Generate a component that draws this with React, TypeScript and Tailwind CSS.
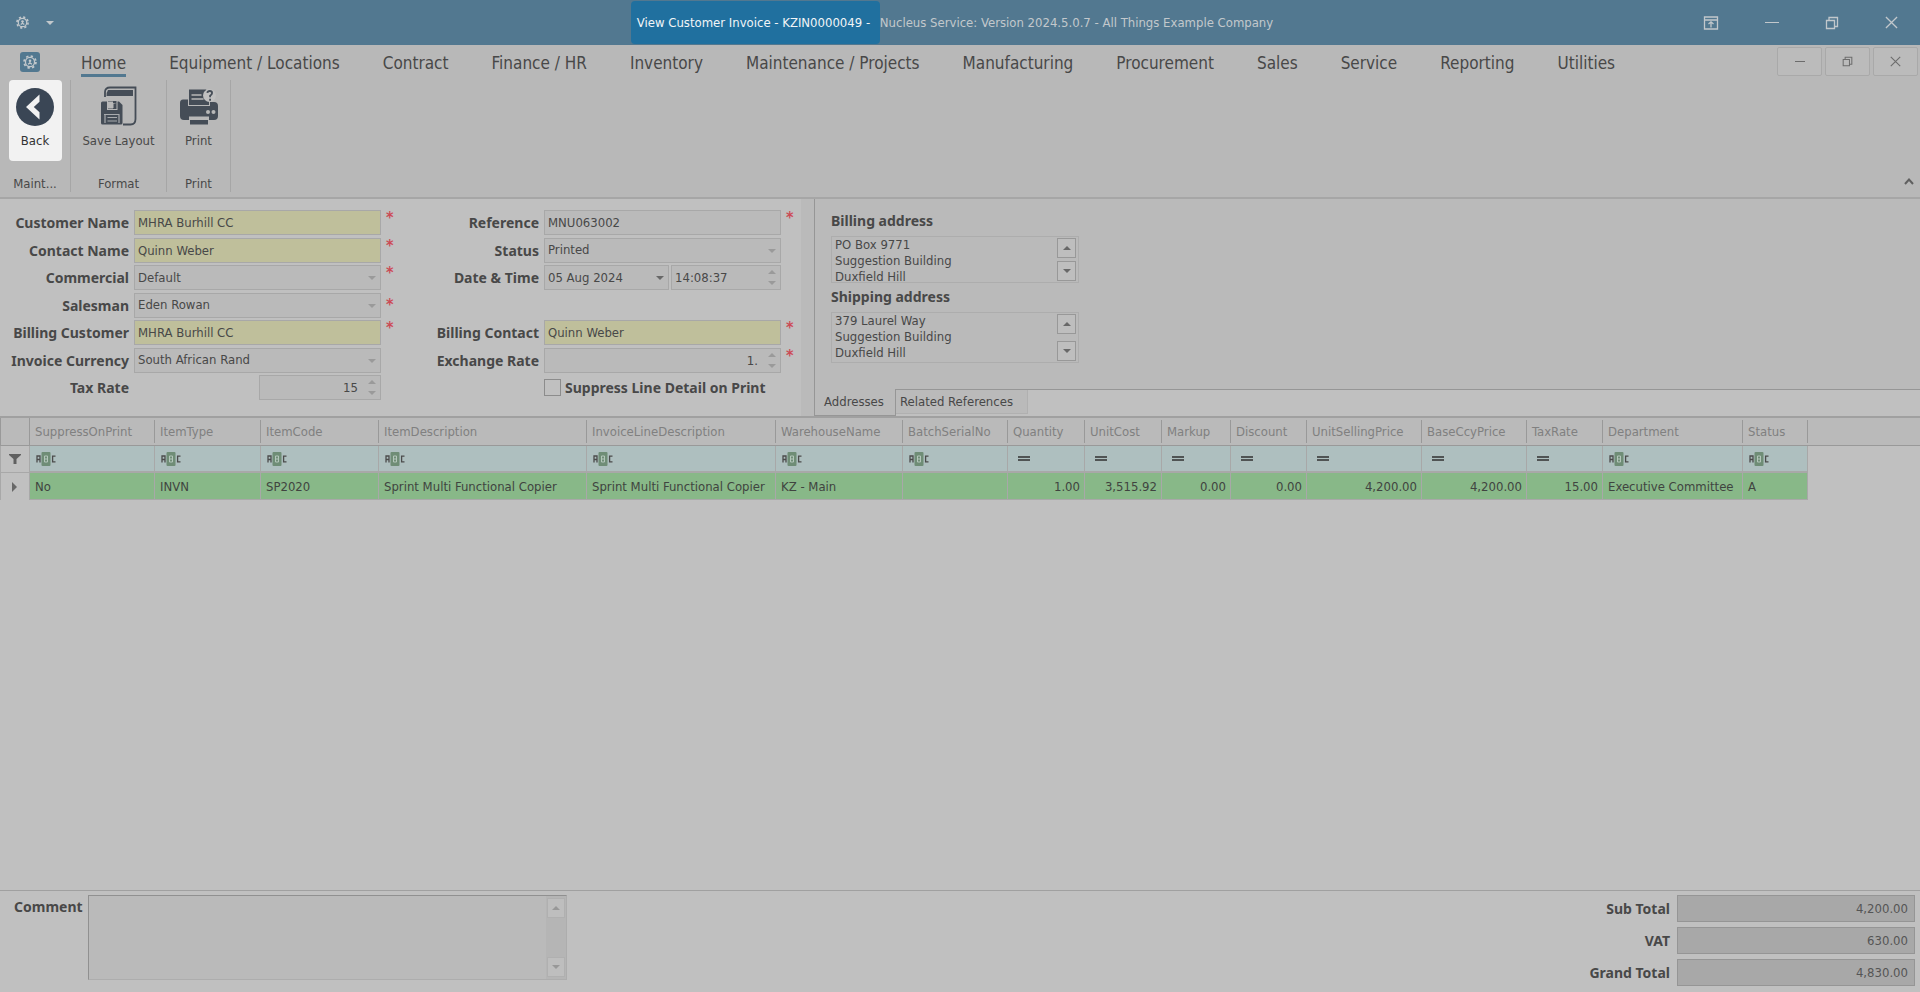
import React from 'react';
import clsx from 'clsx';

const MENU = [
  'Home',
  'Equipment / Locations',
  'Contract',
  'Finance / HR',
  'Inventory',
  'Maintenance / Projects',
  'Manufacturing',
  'Procurement',
  'Sales',
  'Service',
  'Reporting',
  'Utilities',
];

interface Column {
  name: string;
  width: string;
  value: string;
  numeric?: boolean;
}

const COLUMNS: Column[] = [
  { name: 'SuppressOnPrint', width: 'w-[125px]', value: 'No' },
  { name: 'ItemType', width: 'w-[106px]', value: 'INVN' },
  { name: 'ItemCode', width: 'w-[118px]', value: 'SP2020' },
  { name: 'ItemDescription', width: 'w-[208px]', value: 'Sprint Multi Functional Copier' },
  { name: 'InvoiceLineDescription', width: 'w-[189px]', value: 'Sprint Multi Functional Copier' },
  { name: 'WarehouseName', width: 'w-[127px]', value: 'KZ - Main' },
  { name: 'BatchSerialNo', width: 'w-[105px]', value: '' },
  { name: 'Quantity', width: 'w-[77px]', value: '1.00', numeric: true },
  { name: 'UnitCost', width: 'w-[77px]', value: '3,515.92', numeric: true },
  { name: 'Markup', width: 'w-[69px]', value: '0.00', numeric: true },
  { name: 'Discount', width: 'w-[76px]', value: '0.00', numeric: true },
  { name: 'UnitSellingPrice', width: 'w-[115px]', value: '4,200.00', numeric: true },
  { name: 'BaseCcyPrice', width: 'w-[105px]', value: '4,200.00', numeric: true },
  { name: 'TaxRate', width: 'w-[76px]', value: '15.00', numeric: true },
  { name: 'Department', width: 'w-[140px]', value: 'Executive Committee' },
  { name: 'Status', width: 'w-[65px]', value: 'A' },
];

const boldLabel = "font-['Noto_Sans',sans-serif] text-[14px] font-bold text-[#484848]";

/* ---------- icons ---------- */

const GearIcon: React.FC<{ className?: string }> = ({ className }) => (
  <svg viewBox="0 0 16 16" className={className} fill="none" stroke="currentColor">
    <circle cx="8" cy="8" r="5.2" strokeWidth="1.5" />
    <circle cx="8" cy="8" r="6.8" strokeWidth="2" strokeDasharray="2.67 2.67" />
    <circle cx="8" cy="6.6" r="1.5" fill="currentColor" stroke="none" />
    <path d="M8 7v2.500M5.800 10.600L8 9l2.200 1.600" strokeWidth="1.5" />
  </svg>
);

const BackIcon = () => (
  <svg viewBox="0 0 38 38" className="size-[38px]">
    <circle cx="19" cy="19" r="19" fill="#3a4655" />
    <path d="M23.5 6.5v7.2L17.800 19l5.700 5.300v7.200L10 19z" fill="#f2f2f2" />
  </svg>
);

const SaveLayoutIcon = () => (
  <svg viewBox="0 0 36 40" className="h-10 w-9">
    <path d="M4 11V6q0-4.500 5-4.500h25.500V33q0 5.500-5 5.500H22" fill="none" stroke="#454d57" strokeWidth="1.800" />
    <path d="M7 4h25v6H5.500q0-4 1.500-6z" fill="#454d57" />
    <path d="M0 17q0-1.500 1.500-1.500H18l3.500 3.500v18q0 1.500-1.500 1.500H1.500Q0 38.500 0 37z" fill="#454d57" />
    <path d="M6 15h10.500v9H6z" fill="#b8b8b8" />
    <path d="M7 15h8.500v8H7z" fill="#454d57" />
    <path d="M6 15.500h6v7H6zM12 17h2.500v5H12z" fill="#b8b8b8" />
    <path d="M12.500 17.500h2.500v5h-2.500z" fill="#454d57" />
    <path d="M3 28.500h15.500M4 37v-8.500M18 37v-8.500M6.500 31.500h9.500M6.500 35h9.500" stroke="#a8abae" strokeWidth="1.200" />
  </svg>
);

const PrintIcon = () => (
  <svg viewBox="0 0 40 40" className="size-10">
    <path d="M10 3.500h17l3 3V19H10z" fill="#454d57" />
    <path d="M12.500 9h10M12.500 13h12" stroke="#b8b8b8" strokeWidth="1.300" />
    <path d="M4 13.500h5V20h22v-4h4q4 0 4 4v10q0 4-4 4h-5v-3.500H10V34H5q-4 0-4-4V17q0-3.500 3-3.500z" fill="#454d57" />
    <path d="M11 34h18v4.500H11z" fill="#454d57" />
    <circle cx="30.500" cy="9.500" r="6.500" fill="#c0c0c0" />
    <path d="M28.300 6.800q.3-1.800 2.500-1.800t2.300 2q0 1.300-2 2.700v1.600M31.100 12.800v2" fill="none" stroke="#454d57" strokeWidth="1.800" />
    <circle cx="29" cy="26" r="2" fill="#b8b8b8" />
    <circle cx="34.500" cy="26" r="2" fill="#b8b8b8" />
  </svg>
);

const RestoreIcon: React.FC<{ className?: string }> = ({ className }) => (
  <svg viewBox="0 0 14 14" className={className} fill="none" stroke="currentColor" strokeWidth="1.300">
    <path d="M1.500 4.500h8v8h-8zM4 4V1.500h8.500v9H10" />
  </svg>
);

const CloseIcon: React.FC<{ className?: string }> = ({ className }) => (
  <svg viewBox="0 0 14 14" className={className} stroke="currentColor" strokeWidth="1.400">
    <path d="M1 1l12 12M13 1L1 13" />
  </svg>
);

const RibbonToggleIcon = () => (
  <svg viewBox="0 0 16 14" className="h-[14px] w-4" fill="none" stroke="currentColor" strokeWidth="1.300">
    <path d="M1.500 1h13v12h-13zM1.500 4h13M8 11.500V6M5.500 8L8 5.800 10.500 8" />
  </svg>
);

const Caret: React.FC<{ up?: boolean; className?: string }> = ({ up, className }) => (
  <svg viewBox="0 0 8 4" className={clsx('h-1 w-2', className)} fill="currentColor">
    <path d={up ? 'M0 4h8L4 0z' : 'M0 0h8L4 4z'} />
  </svg>
);

const AbcIcon = () => (
  <svg viewBox="0 0 20 14" className="h-[14px] w-5" fill="none">
    <path d="M1 10.500V4h3v6.500M1 7.500h3" stroke="#4c4c4c" strokeWidth="1.300" />
    <rect x="5.500" width="9" height="14" rx="1" fill="#6f8d76" />
    <path d="M8.500 4h3v6h-3zM8.500 7h3" stroke="#b4c6bb" strokeWidth="1" />
    <path d="M19.500 4.200H16.600v5.600h2.900" stroke="#4c4c4c" strokeWidth="1.300" />
  </svg>
);

const EqualsIcon = () => (
  <svg viewBox="0 0 12 6" className="h-[6px] w-3" fill="#505454">
    <path d="M0 0h12v2H0zM0 3h12v2H0z" />
  </svg>
);

/* ---------- form pieces ---------- */

const fieldBox = 'h-[25px] border border-[#a8a8a8] pl-[3px] text-[13px] text-[#484848] outline-none';

interface RowProps {
  label?: string;
  htmlFor?: string;
  required?: boolean;
  lowMark?: boolean;
  children: React.ReactNode;
}

const FormRow: React.FC<RowProps> = ({ label, htmlFor, required, lowMark, children }) => (
  <div className="flex h-[25px]">
    <label htmlFor={htmlFor} className={clsx(boldLabel, 'w-[129px] shrink-0 pt-[1px] text-right leading-6')}>
      {label}
    </label>
    <div className="ml-[5px] flex flex-1 justify-end gap-[2px]">{children}</div>
    <span className={clsx('w-5 shrink-0 pl-[5px] text-[16px] font-bold leading-4 text-[#cc4a56]', lowMark && 'pt-1')}>
      {required && '*'}
    </span>
  </div>
);

const TextField: React.FC<{ id: string; value: string; yellow?: boolean }> = ({ id, value, yellow }) => (
  <input
    id={id}
    type="text"
    readOnly
    defaultValue={value}
    className={clsx(fieldBox, 'w-full', yellow ? 'bg-[#bfbf9b]' : 'bg-[#bababa]')}
  />
);

const SelectField: React.FC<{ id: string; value: string; active?: boolean }> = ({ id, value, active }) => (
  <div className="relative flex-1">
    <select id={id} className={clsx(fieldBox, 'w-full appearance-none bg-[#bababa]')}>
      <option>{value}</option>
    </select>
    <Caret className={clsx('pointer-events-none absolute right-[5px] top-[11px]', active ? 'text-[#686868]' : 'text-[#9a9a9a]')} />
  </div>
);

interface SpinProps {
  id: string;
  value: string;
  width: string;
  right?: boolean;
  label?: string;
}

const SpinField: React.FC<SpinProps> = ({ id, value, width, right, label }) => (
  <div className={clsx('relative', width)}>
    <input
      id={id}
      type="text"
      readOnly
      aria-label={label}
      defaultValue={value}
      className={clsx(fieldBox, 'w-full bg-[#bababa] pr-[22px]', right && 'text-right')}
    />
    <div className="pointer-events-none absolute right-[5px] top-[5px] flex flex-col gap-[7px] text-[#9a9a9a]">
      <Caret up />
      <Caret />
    </div>
  </div>
);

const AddressBox: React.FC<{ id: string; label: string; lines: string; height: string }> = ({ id, label, lines, height }) => (
  <div>
    <label htmlFor={id} className={clsx(boldLabel, 'block h-[29px] leading-7')}>{label}</label>
    <div className={clsx('flex w-[248px] border border-[#adadad]', height)}>
      <textarea
        id={id}
        readOnly
        defaultValue={lines}
        className="h-full flex-1 resize-none overflow-hidden pl-[3px] text-[13px] leading-4 text-[#484848] outline-none"
      />
      <div className="flex w-[21px] flex-col justify-between py-[1px] pr-[2px]">
        {[true, false].map((up) => (
          <button
            key={String(up)}
            aria-label={up ? 'Scroll up' : 'Scroll down'}
            className="flex h-5 items-center justify-center border border-[#989898] bg-[#bebebe] text-[#686868]"
          >
            <Caret up={up} />
          </button>
        ))}
      </div>
    </div>
  </div>
);

const RibbonGroup: React.FC<{ title: string; width: string; children: React.ReactNode }> = ({ title, width, children }) => (
  <div className={clsx('flex h-[112px] flex-col items-center justify-between border-r border-[#a6a6a6]', width)}>
    {children}
    <span className="h-5 leading-6">{title}</span>
  </div>
);

const ribbonButton = 'flex flex-col items-center gap-[5px] leading-5';

const Total: React.FC<{ id: string; label: string; value: string }> = ({ id, label, value }) => (
  <div className="flex items-center gap-[7px]">
    <label htmlFor={id} className={clsx(boldLabel, 'flex-1 text-right')}>{label}</label>
    <input
      id={id}
      readOnly
      defaultValue={value}
      className="h-[27px] w-[238px] border border-[#959595] bg-[#a8a8a8] pr-[6px] text-right text-[13px] text-[#555] outline-none"
    />
  </div>
);

export default function App() {
  return (
    <div className="flex min-h-screen flex-col bg-[#c0c0c0] font-['DejaVu_Sans_Condensed','DejaVu_Sans',sans-serif] text-[13px] text-[#484848]">
      {/* Title bar */}
      <header className="flex h-[45px] items-center bg-[#527890] text-[#c2c8cc]">
        <div className="flex flex-1 items-center gap-[17px] pl-4">
          <GearIcon className="size-[13px]" />
          <button aria-label="Customize quick access"><Caret /></button>
        </div>
        <h1 className="flex items-center pr-[10px] leading-5">
          <span className="flex h-[43px] w-[249px] items-center whitespace-nowrap rounded bg-[#20709f] pl-[6px] text-[#f2f5f7]">
            View Customer Invoice - KZIN0000049 -
          </span>
          <span className="whitespace-nowrap">Nucleus Service: Version 2024.5.0.7 - All Things Example Company</span>
        </h1>
        <div className="flex flex-1 items-center justify-end gap-[46px] pr-[22px]">
          <button aria-label="Ribbon display options"><RibbonToggleIcon /></button>
          <button aria-label="Minimize" className="h-px w-[14px] bg-current" />
          <button aria-label="Restore"><RestoreIcon className="size-[14px]" /></button>
          <button aria-label="Close"><CloseIcon className="size-[13px]" /></button>
        </div>
      </header>

      {/* Ribbon */}
      <section className="border-b-2 border-[#a6a6a6] bg-[#b8b8b8]">
        <div className="flex h-[35px] pl-5">
          <button aria-label="Application menu" className="mt-[7px] flex size-5 shrink-0 items-center justify-center rounded-[3px] bg-[#527890] text-[#c2c8cc]">
            <GearIcon className="size-[14px]" />
          </button>
          <nav className="ml-[41px] flex flex-1 gap-[43px] text-[17px]">
            {MENU.map((item) => (
              <a
                key={item}
                href="#"
                className={clsx(
                  'h-8 whitespace-nowrap pt-[4px] leading-7',
                  item === 'Home' && 'border-b-3 border-[#527890]'
                )}
              >
                {item}
              </a>
            ))}
          </nav>
          <div className="flex gap-[3px] pr-[2px] pt-[2px] text-[#6c6c6c]">
            <button aria-label="Minimize document" className="flex h-[29px] w-[45px] items-center justify-center rounded-[2px] border border-[#a9a9a9] bg-[#bbb]">
              <span className="h-px w-[10px] bg-current" />
            </button>
            <button aria-label="Restore document" className="flex h-[29px] w-[45px] items-center justify-center rounded-[2px] border border-[#a9a9a9] bg-[#bbb]">
              <RestoreIcon className="size-[11px]" />
            </button>
            <button aria-label="Close document" className="flex h-[29px] w-[45px] items-center justify-center rounded-[2px] border border-[#a9a9a9] bg-[#bbb]">
              <CloseIcon className="size-[11px]" />
            </button>
          </div>
        </div>

        <div className="flex h-[117px]">
          <div className="flex flex-1">
            <RibbonGroup title="Maint..." width="w-[71px]">
              <button className={clsx(ribbonButton, 'h-[81px] w-[53px] shrink-0 rounded bg-[#f2f2f2] pt-2 text-[#333]')}>
                <BackIcon />
                <span>Back</span>
              </button>
            </RibbonGroup>
            <RibbonGroup title="Format" width="w-24">
              <button className={clsx(ribbonButton, 'pt-[6px]')}>
                <SaveLayoutIcon />
                <span>Save Layout</span>
              </button>
            </RibbonGroup>
            <RibbonGroup title="Print" width="w-16">
              <button className={clsx(ribbonButton, 'pt-[6px]')}>
                <PrintIcon />
                <span>Print</span>
              </button>
            </RibbonGroup>
          </div>
          <button aria-label="Collapse ribbon" className="self-end pb-3 pr-[6px] text-[#606060]">
            <svg viewBox="0 0 10 7" className="h-[7px] w-[10px]" fill="none" stroke="currentColor" strokeWidth="2">
              <path d="M1 6l4-4.500L9 6" />
            </svg>
          </button>
        </div>
      </section>

      {/* Invoice details */}
      <main className="flex flex-1 flex-col">
        <section className="flex h-[217px]">
          <div className="flex pt-[11px]">
            <div className="grid h-[190px] w-[401px] content-between">
              <FormRow label="Customer Name" htmlFor="customer" required><TextField id="customer" value="MHRA Burhill CC" yellow /></FormRow>
              <FormRow label="Contact Name" htmlFor="contact" required><TextField id="contact" value="Quinn Weber" yellow /></FormRow>
              <FormRow label="Commercial" htmlFor="commercial" required><SelectField id="commercial" value="Default" /></FormRow>
              <FormRow label="Salesman" htmlFor="salesman" required lowMark><SelectField id="salesman" value="Eden Rowan" /></FormRow>
              <FormRow label="Billing Customer" htmlFor="billing-customer" required><TextField id="billing-customer" value="MHRA Burhill CC" yellow /></FormRow>
              <FormRow label="Invoice Currency" htmlFor="currency"><SelectField id="currency" value="South African Rand" /></FormRow>
              <FormRow label="Tax Rate" htmlFor="tax-rate"><SpinField id="tax-rate" value="15" width="w-[122px]" right /></FormRow>
            </div>
            <div className="ml-[9px] grid h-[190px] w-[391px] content-between">
              <FormRow label="Reference" htmlFor="reference" required><TextField id="reference" value="MNU063002" /></FormRow>
              <FormRow label="Status" htmlFor="status"><SelectField id="status" value="Printed" /></FormRow>
              <FormRow label="Date & Time" htmlFor="date">
                <SelectField id="date" value="05 Aug 2024" active />
                <SpinField id="time" value="14:08:37" width="w-[110px]" label="Time" />
              </FormRow>
              <div className="h-[25px]" />
              <FormRow label="Billing Contact" htmlFor="billing-contact" required><TextField id="billing-contact" value="Quinn Weber" yellow /></FormRow>
              <FormRow label="Exchange Rate" htmlFor="exchange-rate" required><SpinField id="exchange-rate" value="1." width="w-full" right /></FormRow>
              <div className="flex h-[25px] items-center gap-1 pl-[134px]">
                <input id="suppress" type="checkbox" className="size-[17px] appearance-none border border-[#8c8c8c]" />
                <label htmlFor="suppress" className={boldLabel}>Suppress Line Detail on Print</label>
              </div>
            </div>
          </div>

          <div className="w-[13px] bg-[#bababa]" />

          {/* Address tabs */}
          <div className="flex flex-1 flex-col border-l border-[#969696]">
            <div className="flex flex-1 flex-col bg-[#bababa] pl-4 pt-2">
              <AddressBox id="billing-address" label="Billing address" lines={'PO Box 9771\nSuggestion Building\nDuxfield Hill'} height="h-[47px]" />
              <AddressBox id="shipping-address" label="Shipping address" lines={'379 Laurel Way\nSuggestion Building\nDuxfield Hill'} height="h-[51px]" />
            </div>
            <div className="flex h-[27px]" role="tablist">
              <button role="tab" aria-selected="true" className="h-[27px] w-[81px] border-b border-r border-[#969696] bg-[#bababa] pr-[2px]">
                Addresses
              </button>
              <div className="flex flex-1 items-start border-t border-[#969696]">
                <button role="tab" aria-selected="false" className="h-6 w-[132px] border-b border-r border-[#b0b0b0] bg-[#bababa] pl-1 text-left">
                  Related References
                </button>
              </div>
            </div>
          </div>
        </section>

        {/* Invoice lines */}
        <section className="flex-1 border-b border-t-2 border-[#a0a0a0]">
          <table className="w-full table-fixed border-separate border-spacing-0">
            <thead>
              <tr className="h-7 bg-[#bababa]">
                <th className="w-[30px] border-b border-l border-r border-[#999]" />
                {COLUMNS.map((col) => (
                  <th key={col.name} className={clsx(col.width, 'border-b border-[#999] py-[2px] text-left font-normal text-[#808080]')}>
                    <div className="h-[23px] border-r border-[#999] pl-[5px] leading-6">{col.name}</div>
                  </th>
                ))}
                <th className="border-b border-[#999]" />
              </tr>
            </thead>
            <tbody>
              <tr className="h-[27px]">
                <td className="border-b border-l border-r border-[#a8a8a8]">
                  <svg viewBox="0 0 12 10" className="ml-2 h-[10px] w-3" fill="#606060">
                    <path d="M0 0h12v1L7.500 5v5h-3V5L0 1z" />
                  </svg>
                </td>
                {COLUMNS.map((col) => (
                  <td key={col.name} className={clsx('border-b-2 border-r border-[#a8a8a8] bg-[#aebfbf]', col.numeric ? 'pl-[10px]' : 'pl-[6px]')}>
                    {col.numeric ? <EqualsIcon /> : <AbcIcon />}
                  </td>
                ))}
                <td />
              </tr>
              <tr className="h-[27px]">
                <td className="border-l border-r border-[#a8a8a8]">
                  <svg viewBox="0 0 5 10" className="ml-[11px] h-[10px] w-[5px]" fill="#686868">
                    <path d="M0 0l5 5-5 5z" />
                  </svg>
                </td>
                {COLUMNS.map((col) => (
                  <td
                    key={col.name}
                    className={clsx(
                      'whitespace-nowrap border-b border-r border-[#a8a8a8] bg-[#88b888] pl-[5px] pt-[1px] text-[#404440]',
                      col.numeric && 'pr-1 text-right'
                    )}
                  >
                    {col.value}
                  </td>
                ))}
                <td />
              </tr>
            </tbody>
          </table>
        </section>
      </main>

      {/* Comment and totals */}
      <footer className="flex h-[101px] justify-between pl-[14px] pr-[5px] pt-1">
        <div className="flex gap-[5px]">
          <label htmlFor="comment" className={clsx(boldLabel, 'w-[69px] leading-6')}>Comment</label>
          <div className="flex h-[85px] w-[479px] border border-b-[#adadad] border-l-[#909090] border-r-[#adadad] border-t-[#909090] bg-[#bababa]">
            <textarea id="comment" className="flex-1 resize-none overflow-hidden p-1 outline-none" />
            <div className="flex w-5 flex-col justify-between bg-[#b5b5b5] px-[1px] py-[2px] text-[#989898]">
              <button aria-label="Scroll comment up" className="flex h-5 items-center justify-center border border-[#b0b0b0] bg-[#bebebe]"><Caret up /></button>
              <button aria-label="Scroll comment down" className="flex h-5 items-center justify-center border border-[#b0b0b0] bg-[#bebebe]"><Caret /></button>
            </div>
          </div>
        </div>
        <div className="flex w-[360px] flex-col gap-[5px]">
          <Total id="sub-total" label="Sub Total" value="4,200.00" />
          <Total id="vat" label="VAT" value="630.00" />
          <Total id="grand-total" label="Grand Total" value="4,830.00" />
        </div>
      </footer>
    </div>
  );
}
